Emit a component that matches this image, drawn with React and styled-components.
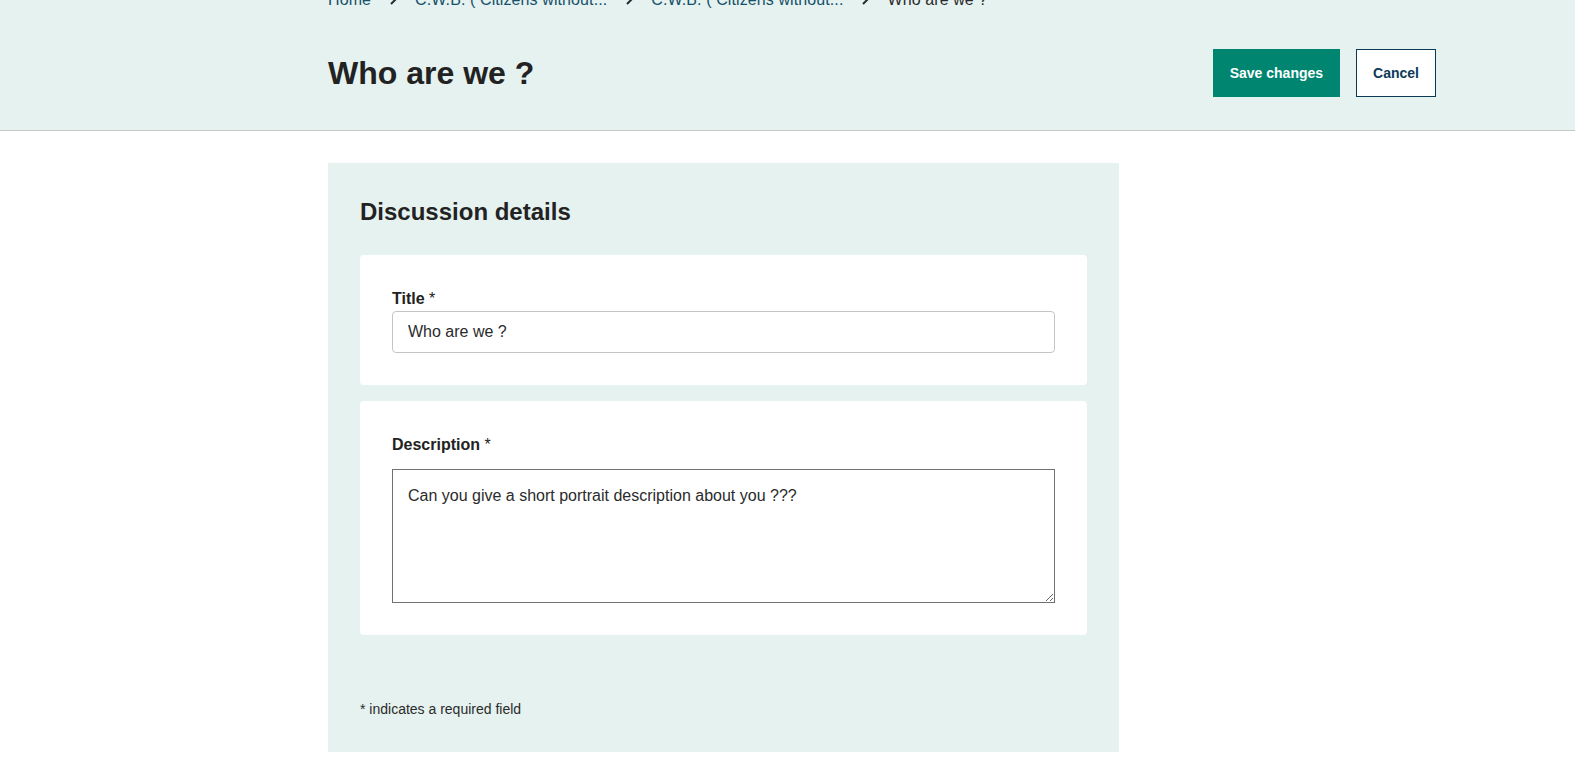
import React, { useState } from "react";
import styled, { createGlobalStyle } from "styled-components";

const GlobalStyle = createGlobalStyle`
  body {
    margin: 0;
    font-family: "Liberation Sans", Arial, sans-serif;
    color: #222222;
    background: #ffffff;
    overflow: hidden;
  }
  * {
    box-sizing: border-box;
  }
`;

const HeaderBar = styled.header`
  background-color: #e5f2ef;
  border-bottom: 1px solid #c6cbca;
  padding-bottom: 33px;
`;

const Container = styled.div`
  margin-left: 328px;
  width: 1108px;
`;

const Breadcrumb = styled.nav`
  display: flex;
  align-items: center;
  margin-top: -12px;
  height: 24px;
  font-size: 16px;
  line-height: 24px;
`;

const Crumb = styled.a`
  color: ${({ current }) => (current ? "#2b2b2b" : "#17506a")};
  text-decoration: none;
  white-space: nowrap;
  letter-spacing: 0.1px;
`;

const Chevron = styled.svg`
  flex: none;
  margin: 0 18px;
  width: 8px;
  height: 10px;
`;

const TitleRow = styled.div`
  display: flex;
  align-items: center;
  justify-content: space-between;
  margin-top: 37px;
`;

const PageTitle = styled.h1`
  margin: 0;
  font-size: 32px;
  line-height: 40px;
  font-weight: 700;
  color: #222222;
`;

const Actions = styled.div`
  display: flex;
  gap: 16px;
`;

const Button = styled.button`
  height: 48px;
  padding: 0 16px;
  font-family: "Liberation Sans", Arial, sans-serif;
  font-size: 14px;
  font-weight: 700;
  cursor: pointer;
  border: 1px solid ${({ primary }) => (primary ? "#008571" : "#0b3a57")};
  background-color: ${({ primary }) => (primary ? "#008571" : "#ffffff")};
  color: ${({ primary }) => (primary ? "#ffffff" : "#0b3a57")};
  border-radius: 0;
`;

const Main = styled.main`
  padding-top: 32px;
`;

const Panel = styled.section`
  width: 791px;
  background-color: #e5f2ef;
  padding: 33px 32px 33px;
`;

const PanelTitle = styled.h2`
  margin: 0 0 27px;
  font-size: 24px;
  line-height: 32px;
  font-weight: 700;
  color: #222222;
`;

const Card = styled.div`
  background: #ffffff;
  border-radius: 4px;
  padding: 32px;
  margin-bottom: 16px;
`;

const Label = styled.label`
  display: block;
  font-size: 16px;
  line-height: 24px;
  font-weight: 700;
  color: #222222;
  margin-bottom: ${({ gap }) => gap || 0}px;

  span {
    font-weight: 400;
  }
`;

const TextInput = styled.input`
  display: block;
  width: 100%;
  height: 42px;
  padding: 0 15px;
  font-family: "Liberation Sans", Arial, sans-serif;
  font-size: 16px;
  color: #2b2b2b;
  border: 1px solid #c4c4c4;
  border-radius: 4px;
  outline: none;
`;

const TextArea = styled.textarea`
  display: block;
  width: 100%;
  height: 134px;
  padding: 15px 15px;
  font-family: "Liberation Sans", Arial, sans-serif;
  font-size: 16px;
  line-height: 22px;
  color: #2b2b2b;
  border: 1px solid #707070;
  border-radius: 0;
  outline: none;
`;

const Footnote = styled.p`
  margin: 64px 0 0;
  font-size: 14px;
  line-height: 20px;
  color: #2b2b2b;
`;

const ChevronIcon = () => (
  <Chevron viewBox="0 0 8 10">
    <path d="M2 1l4 4-4 4" fill="none" stroke="#1f2d33" strokeWidth="2" />
  </Chevron>
);

export default function App() {
  const [title, setTitle] = useState("Who are we ?");
  const [description, setDescription] = useState(
    "Can you give a short portrait description about you ???"
  );

  return (
    <>
      <GlobalStyle />
      <HeaderBar>
        <Container>
          <Breadcrumb>
            <Crumb href="#">Home</Crumb>
            <ChevronIcon />
            <Crumb href="#">C.W.B. ( Citizens without...</Crumb>
            <ChevronIcon />
            <Crumb href="#">C.W.B. ( Citizens without...</Crumb>
            <ChevronIcon />
            <Crumb current>Who are we ?</Crumb>
          </Breadcrumb>
          <TitleRow>
            <PageTitle>Who are we ?</PageTitle>
            <Actions>
              <Button primary>Save changes</Button>
              <Button>Cancel</Button>
            </Actions>
          </TitleRow>
        </Container>
      </HeaderBar>
      <Main>
        <Container>
          <Panel>
            <PanelTitle>Discussion details</PanelTitle>
            <Card>
              <Label htmlFor="title">
                Title <span>*</span>
              </Label>
              <TextInput
                id="title"
                value={title}
                onChange={(e) => setTitle(e.target.value)}
              />
            </Card>
            <Card>
              <Label htmlFor="description" gap={12}>
                Description <span>*</span>
              </Label>
              <TextArea
                id="description"
                value={description}
                onChange={(e) => setDescription(e.target.value)}
              />
            </Card>
            <Footnote>* indicates a required field</Footnote>
          </Panel>
        </Container>
      </Main>
    </>
  );
}
